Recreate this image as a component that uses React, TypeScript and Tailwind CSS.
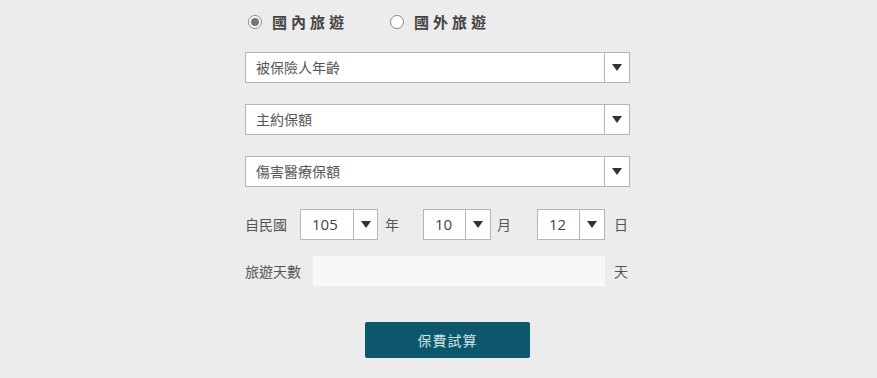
import React from "react";

const font = { fontFamily: '"Noto Sans CJK TC", "Noto Sans", sans-serif' };

function Arrow() {
  return (
    <svg width="10" height="7" viewBox="0 0 10 7">
      <path d="M0 0 L10 0 L5 7 Z" fill="#333" />
    </svg>
  );
}

function Select({ label }: { label: string }) {
  return (
    <div className="flex h-[31px] w-[385px] border border-[#b5b5b5] bg-white">
      <div className="flex flex-1 items-center pl-[10px] text-[14px] text-[#555]">{label}</div>
      <div className="flex w-[25px] items-center justify-center border-l border-[#b5b5b5]">
        <Arrow />
      </div>
    </div>
  );
}

function DateBox({ value, w, split }: { value: string; w: string; split: string }) {
  return (
    <div className={`flex h-[31px] border border-[#b5b5b5] bg-white ${w}`}>
      <div className={`flex items-center pl-[11px] text-[15px] text-[#444] ${split}`} style={{ fontFamily: '"Open Sans", "Noto Sans", sans-serif' }}>
        {value}
      </div>
      <div className="flex flex-1 items-center justify-center border-l border-[#b5b5b5]">
        <Arrow />
      </div>
    </div>
  );
}

export default function App() {
  return (
    <div className="h-[378px] w-full bg-[#ececec] pl-[245px]" style={font}>
      <div className="w-[385px] pt-[12px]">
        <div className="flex h-[20px] items-center pl-[3px]">
          <span className="flex h-[14px] w-[14px] items-center justify-center rounded-full border border-[#888] bg-white">
            <span className="h-[8px] w-[8px] rounded-full bg-[#777]" />
          </span>
          <span className="ml-[10px] text-[15px] font-bold tracking-[4px] text-[#444]">國內旅遊</span>
          <span className="ml-[42px] flex h-[14px] w-[14px] rounded-full border border-[#888] bg-white" />
          <span className="ml-[10px] text-[15px] font-bold tracking-[4px] text-[#444]">國外旅遊</span>
        </div>
        <div className="mt-[20px] flex flex-col gap-[21px]">
          <Select label="被保險人年齡" />
          <Select label="主約保額" />
          <Select label="傷害醫療保額" />
        </div>
        <div className="mt-[22px] flex items-center text-[14px] text-[#555]">
          <span className="w-[55px]">自民國</span>
          <DateBox value="105" w="w-[78px]" split="w-[52px]" />
          <span className="ml-[7px] w-[38px]">年</span>
          <DateBox value="10" w="w-[68px]" split="w-[41px]" />
          <span className="ml-[6px] w-[40px]">月</span>
          <DateBox value="12" w="w-[68px]" split="w-[41px]" />
          <span className="ml-[9px]">日</span>
        </div>
        <div className="mt-[16px] flex items-center text-[14px] text-[#555]">
          <span className="w-[68px]">旅遊天數</span>
          <div className="h-[30px] w-[292px] bg-[#f8f8f8]" />
          <span className="ml-[9px]">天</span>
        </div>
        <button className="ml-[120px] mt-[36px] flex h-[36px] w-[165px] items-center justify-center rounded-[2px] bg-[#0d576d] text-[14px] text-[#cfe0e6] tracking-[1px]">
          保費試算
        </button>
      </div>
    </div>
  );
}
